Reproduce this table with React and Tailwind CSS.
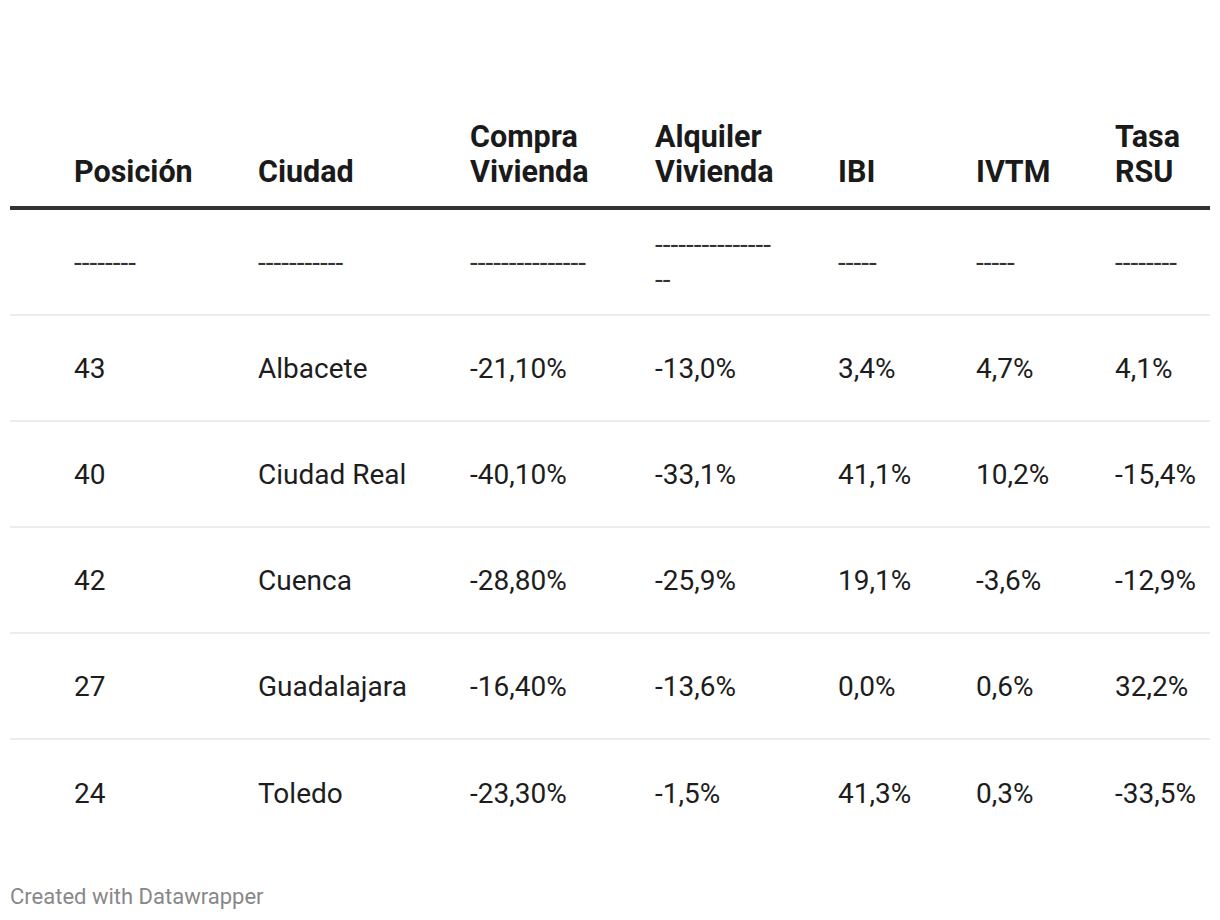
const headers = [
  ['Posición'],
  ['Ciudad'],
  ['Compra', 'Vivienda'],
  ['Alquiler', 'Vivienda'],
  ['IBI'],
  ['IVTM'],
  ['Tasa', 'RSU'],
]

const dashes = [
  ['--------'],
  ['-----------'],
  ['---------------'],
  ['---------------', '--'],
  ['-----'],
  ['-----'],
  ['--------'],
]

const rows = [
  ['43', 'Albacete', '-21,10%', '-13,0%', '3,4%', '4,7%', '4,1%'],
  ['40', 'Ciudad Real', '-40,10%', '-33,1%', '41,1%', '10,2%', '-15,4%'],
  ['42', 'Cuenca', '-28,80%', '-25,9%', '19,1%', '-3,6%', '-12,9%'],
  ['27', 'Guadalajara', '-16,40%', '-13,6%', '0,0%', '0,6%', '32,2%'],
  ['24', 'Toledo', '-23,30%', '-1,5%', '41,3%', '0,3%', '-33,5%'],
]

const cols = 'grid grid-cols-[248px_212px_185px_183px_138px_139px_95px]'

function Cell({ i, children, className = '' }) {
  return (
    <div className={`flex items-center whitespace-nowrap ${i === 0 ? 'pl-[64px]' : ''} ${className}`}>
      {children}
    </div>
  )
}

export default function App() {
  return (
    <div
      className="min-h-[920px] w-[1220px] bg-white pt-[119px]"
      style={{ fontFamily: 'Roboto, "Liberation Sans", sans-serif' }}
    >
      <div className="ml-[10px] w-[1200px]">
        <div className={`${cols} border-b-4 border-[#333333] pb-[17px]`}>
          {headers.map((h, i) => (
            <div
              key={i}
              className={`flex flex-col justify-end whitespace-nowrap text-[30.5px] font-bold leading-[35px] text-[#1a1a1a] ${i === 0 ? 'pl-[64px]' : ''}`}
            >
              {h.map((line) => (
                <span key={line}>{line}</span>
              ))}
            </div>
          ))}
        </div>

        <div className={`${cols} h-[106px] border-b-2 border-[#ededed] text-[28px] leading-[35px] text-[#333]`}>
          {dashes.map((d, i) => (
            <Cell key={i} i={i} className="flex-col !items-start justify-center">
              {d.map((line, j) => (
                <span key={j}>{line}</span>
              ))}
            </Cell>
          ))}
        </div>

        {rows.map((r, ri) => (
          <div
            key={ri}
            className={`${cols} h-[106px] text-[28px] leading-[35px] text-[#1d1d1d] ${
              ri < rows.length - 1 ? 'border-b-2 border-[#ededed]' : ''
            }`}
          >
            {r.map((v, i) => (
              <Cell key={i} i={i}>
                {v}
              </Cell>
            ))}
          </div>
        ))}

        <p className="mt-[39px] text-[22px] leading-[24px] text-[#888888]">Created with Datawrapper</p>
      </div>
    </div>
  )
}
